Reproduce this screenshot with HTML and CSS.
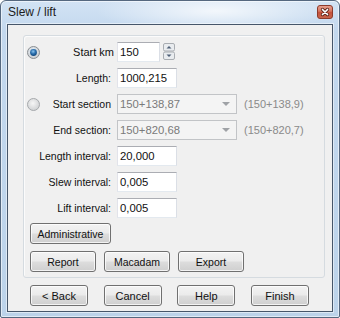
FILE: index.html
```html
<!DOCTYPE html>
<html>
<head>
<meta charset="utf-8">
<link rel="stylesheet" href="styles.css">
</head>
<body>
<div class="window">
  <div class="titlebar">
    <span class="title">Slew / lift</span>
    <span class="close">
      <svg width="16" height="14" viewBox="0 0 16 14">
        <defs>
          <linearGradient id="cg" x1="0" y1="0" x2="0" y2="1">
            <stop offset="0" stop-color="#e8a493"/>
            <stop offset="0.45" stop-color="#d5745e"/>
            <stop offset="0.5" stop-color="#c4503a"/>
            <stop offset="1" stop-color="#c9664c"/>
          </linearGradient>
        </defs>
        <rect x="0.5" y="0.5" width="15" height="13" rx="2.5" fill="url(#cg)" stroke="#8d3a2b"/>
        <path d="M5.5 4.5 L10.5 9.5 M10.5 4.5 L5.5 9.5" stroke="#5a2319" stroke-width="3.2" stroke-linecap="round"/>
        <path d="M5.5 4.5 L10.5 9.5 M10.5 4.5 L5.5 9.5" stroke="#ffffff" stroke-width="1.7" stroke-linecap="round"/>
      </svg>
    </span>
  </div>
  <div class="client">
    <div class="group">
      <div class="form">
        <div class="row">
          <span class="radio">
            <svg width="13" height="13" viewBox="0 0 13 13">
              <defs>
                <radialGradient id="rb" cx="0.45" cy="0.4" r="0.6">
                  <stop offset="0" stop-color="#eaf3fb"/>
                  <stop offset="1" stop-color="#c9cccf"/>
                </radialGradient>
                <radialGradient id="rd" cx="0.45" cy="0.35" r="0.7">
                  <stop offset="0" stop-color="#8cc4ee"/>
                  <stop offset="0.5" stop-color="#2a6fae"/>
                  <stop offset="1" stop-color="#0b3f72"/>
                </radialGradient>
              </defs>
              <circle cx="6.5" cy="6.5" r="6" fill="url(#rb)" stroke="#8a8e92"/>
              <circle cx="6.5" cy="6.5" r="3.4" fill="url(#rd)"/>
            </svg>
          </span>
          <span class="label label-km">Start km</span>
          <span class="field">
            <span class="input w-km">150</span>
            <span class="spin">
              <svg width="12" height="17" viewBox="0 0 12 17">
                <rect x="0.5" y="0.5" width="11" height="7.5" rx="1.5" fill="#e9ecef" stroke="#a9adb2"/>
                <rect x="0.5" y="9" width="11" height="7.5" rx="1.5" fill="#e9ecef" stroke="#a9adb2"/>
                <path d="M3.5 5.5 L6 3 L8.5 5.5 Z" fill="#4f5f76"/>
                <path d="M3.5 11.5 L6 14 L8.5 11.5 Z" fill="#4f5f76"/>
              </svg>
            </span>
          </span>
        </div>
        <div class="row">
          <span class="label">Length:</span>
          <span class="field"><span class="input w-num">1000,215</span></span>
        </div>
        <div class="row">
          <span class="radio">
            <svg width="13" height="13" viewBox="0 0 13 13">
              <defs>
                <radialGradient id="rb2" cx="0.45" cy="0.4" r="0.6">
                  <stop offset="0" stop-color="#f6f6f6"/>
                  <stop offset="1" stop-color="#cfd1d3"/>
                </radialGradient>
              </defs>
              <circle cx="6.5" cy="6.5" r="6" fill="url(#rb2)" stroke="#a6a9ac"/>
            </svg>
          </span>
          <span class="label">Start section</span>
          <span class="field">
            <span class="combo"><span class="combo-text">150+138,87</span><span class="arrow"></span></span>
            <span class="note">(150+138,9)</span>
          </span>
        </div>
        <div class="row">
          <span class="label">End section:</span>
          <span class="field">
            <span class="combo"><span class="combo-text">150+820,68</span><span class="arrow"></span></span>
            <span class="note">(150+820,7)</span>
          </span>
        </div>
        <div class="row">
          <span class="label">Length interval:</span>
          <span class="field"><span class="input w-num">20,000</span></span>
        </div>
        <div class="row">
          <span class="label">Slew interval:</span>
          <span class="field"><span class="input w-num">0,005</span></span>
        </div>
        <div class="row">
          <span class="label">Lift interval:</span>
          <span class="field"><span class="input w-num">0,005</span></span>
        </div>
      </div>
      <div class="admin-row"><span class="btn btn-admin">Administrative</span></div>
      <div class="actions">
        <span class="btn btn-act">Report</span>
        <span class="btn btn-act">Macadam</span>
        <span class="btn btn-act">Export</span>
      </div>
    </div>
    <div class="footer">
      <span class="btn btn-nav">&lt; Back</span>
      <span class="btn btn-nav">Cancel</span>
      <span class="btn btn-nav">Help</span>
      <span class="btn btn-nav">Finish</span>
    </div>
  </div>
</div>
</body>
</html>
```
FILE: styles.css
```css
* { box-sizing: border-box; }
html, body { margin: 0; padding: 0; }
body {
  width: 340px;
  height: 318px;
  font-family: "Liberation Sans", Arial, sans-serif;
  font-size: 10.5px;
  color: #111;
  background: #ffffff;
}
.window {
  width: 340px;
  height: 318px;
  border: 1px solid #55687f;
  border-radius: 6px 6px 2px 2px;
  background:
    radial-gradient(ellipse 120px 22px at 215px 10px, rgba(255,255,255,0.75), rgba(255,255,255,0)),
    linear-gradient(to bottom, #d2e3f4 0px, #c3d8ee 30px, #bcd3ea 100%);
  box-shadow: inset 0 0 0 1px rgba(255,255,255,0.55);
  display: flex;
  flex-direction: column;
}
.titlebar {
  height: 23px;
  display: flex;
  align-items: center;
  justify-content: space-between;
  padding: 0 6px 0 7px;
}
.title {
  font-size: 12px;
  color: #1b1b1b;
  margin-top: -1px;
}
.close {
  display: flex;
  margin-top: -1px;
}
.client {
  margin: 0 6px;
  height: 288px;
  border: 1px solid #46566a;
  background: #f0f0f0;
  display: flex;
  flex-direction: column;
  box-shadow: 0 0 0 1px rgba(255,255,255,0.5);
}
.group {
  margin: 10px 7px 0 15px;
  height: 243px;
  border: 1px solid #d5dbe0;
  border-radius: 3px;
  box-shadow: inset 1px 1px 0 #fbfbfb;
  padding: 3px 3px 0 3px;
  display: flex;
  flex-direction: column;
}
.form {
  display: flex;
  flex-direction: column;
}
.row {
  height: 26px;
  display: grid;
  grid-template-columns: 13px 71px 6px 1fr;
  align-items: center;
}
.radio {
  grid-column: 1;
  grid-row: 1;
  display: flex;
  height: 13px;
}
.label {
  grid-column: 1 / 3;
  grid-row: 1;
  text-align: right;
  white-space: nowrap;
}
.label-km { margin-right: -3px; font-size: 11px; }
.field {
  grid-column: 4;
  grid-row: 1;
  display: flex;
  align-items: center;
}
.input {
  height: 20px;
  border: 1px solid;
  border-color: #abadb3 #dbdfe6 #e3e9ef #e2e3ea;
  background: #fff;
  padding: 0 0 0 2px;
  line-height: 18px;
  white-space: nowrap;
  font-size: 11.3px;
}
.w-km { width: 43px; }
.w-num { width: 60px; }
.spin {
  display: flex;
  margin-left: 3px;
  margin-top: -1px;
}
.combo {
  width: 120px;
  height: 20px;
  border: 1px solid #c2c4c7;
  background: #f4f4f4;
  display: flex;
  align-items: center;
  justify-content: space-between;
  padding: 0 5px 0 2px;
}
.combo-text {
  color: #7a7a7a;
  font-size: 11.3px;
  white-space: nowrap;
}
.arrow {
  width: 0;
  height: 0;
  border-left: 4px solid transparent;
  border-right: 4px solid transparent;
  border-top: 4px solid #9fa2a6;
  margin-right: 1px;
}
.note {
  margin-left: 7px;
  color: #8a8a8a;
  font-size: 11px;
  white-space: nowrap;
}
.btn {
  height: 21px;
  border: 1px solid #707070;
  border-radius: 3px;
  background: linear-gradient(to bottom, #f3f3f3 0%, #ebebeb 48%, #dddddd 52%, #cfcfcf 100%);
  box-shadow: inset 0 0 0 1px rgba(255,255,255,0.75);
  display: flex;
  align-items: center;
  justify-content: center;
  color: #111;
  white-space: nowrap;
  font-size: 10.5px;
}
.admin-row {
  display: flex;
  padding-left: 3px;
  margin-top: 2px;
}
.btn-admin { width: 81px; }
.actions {
  display: flex;
  gap: 8px;
  padding-left: 3px;
  margin-top: 7px;
}
.btn-act { width: 66px; }
.footer {
  display: flex;
  gap: 15.67px;
  padding-left: 22px;
  margin-top: 7px;
}
.btn-nav { width: 58px; font-size: 11px; }
```
